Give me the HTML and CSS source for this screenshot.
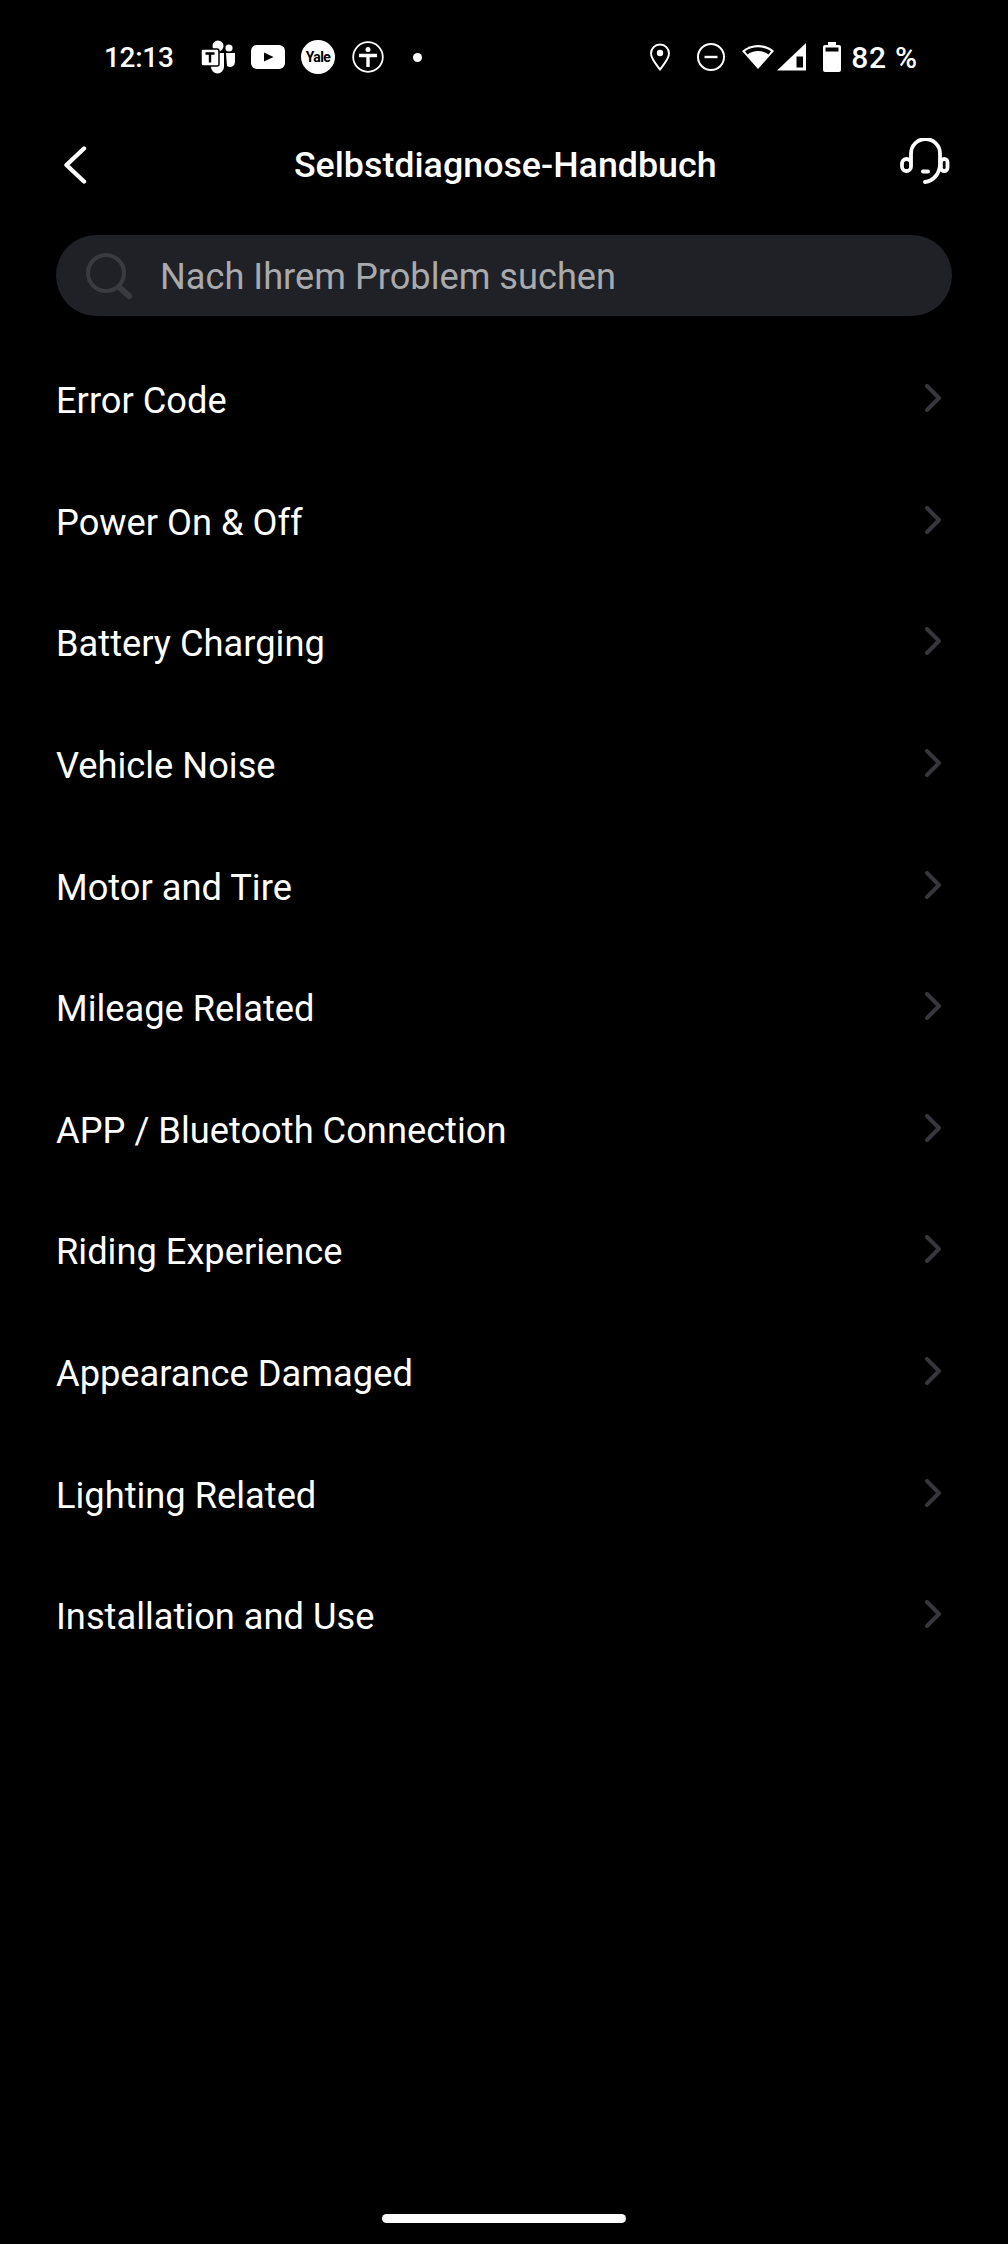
FILE: index.html
```html
<!DOCTYPE html>
<html lang="en">
  <head>
    <meta charset="UTF-8" />
    <meta name="viewport" content="width=device-width, initial-scale=1.0" />
    <title>Selbstdiagnose-Handbuch</title>
    <link rel="stylesheet" href="styles.css">
  </head>
  <body>
    <div class="page">
      <div class="status">
        <div class="status-left">
          <span class="time">12:13</span>
          <svg class="ic-teams" viewBox="0 0 36 36" width="36" height="36">
            <circle cx="18" cy="7" r="5.5" fill="#fff"/>
            <circle cx="29" cy="9" r="3.6" fill="#fff"/>
            <path d="M11 14h13v14a6.5 6.5 0 0 1-13 0z" fill="#fff"/>
            <path d="M26 14h9v9a5 5 0 0 1-8 4z" fill="#fff"/>
            <rect x="1" y="10" width="18" height="17" rx="2" fill="#fff" stroke="#000" stroke-width="1.5"/>
            <path d="M5.500 14.500h9M10 14.500v9" stroke="#000" stroke-width="2.400" fill="none"/>
          </svg>
          <svg class="ic-yt" viewBox="0 0 34 24" width="34" height="24">
            <rect width="34" height="24" rx="6" fill="#fff"/>
            <path d="M13 7.500l9.500 4.500-9.500 4.500z" fill="#000"/>
          </svg>
          <span class="ic-yale">Yale</span>
          <svg class="ic-plus" viewBox="0 0 32 32" width="32" height="32">
            <circle cx="16" cy="16" r="14.800" fill="none" stroke="#fff" stroke-width="1.800"/>
            <circle cx="16" cy="8.500" r="2.500" fill="#fff"/>
            <path d="M7 14.500h18M16 14v12" stroke="#fff" stroke-width="3.400" fill="none"/>
          </svg>
          <span class="ic-dot"></span>
        </div>
        <div class="status-right">
          <svg class="ic-pin" viewBox="0 0 22 28" width="22" height="28">
            <path d="M11 26.500C6 20 2 15.500 2 10.500a9 9 0 0 1 18 0C20 15.500 16 20 11 26.500z" fill="none" stroke="#fff" stroke-width="2"/>
            <circle cx="11" cy="10" r="3.200" fill="#fff"/>
          </svg>
          <svg class="ic-dnd" viewBox="0 0 28 28" width="28" height="28">
            <circle cx="14" cy="14" r="13" fill="none" stroke="#fff" stroke-width="2"/>
            <path d="M7.500 14h13" stroke="#fff" stroke-width="2.400"/>
          </svg>
          <svg class="ic-wifi" viewBox="0 0 34 28" width="34" height="28">
            <path d="M17 26L1 8C10 0 24 0 33 8z" fill="#fff"/>
            <path d="M17 8C13 8 9 9.500 6.500 11.500L4 8.300C11 3 23 3 30 8.300L27.500 11.500C25 9.500 21 8 17 8z" fill="#000"/>
          </svg>
          <svg class="ic-signal" viewBox="0 0 30 28" width="30" height="28">
            <path d="M0 27.500L29 0v27.500z" fill="#fff"/>
            <path d="M19.500 13.500h6.500v11h-6.500z" fill="#000"/>
          </svg>
          <svg class="ic-batt" viewBox="0 0 18 30" width="18" height="30">
            <path d="M5 0h8v3h3a2 2 0 0 1 2 2v23a2 2 0 0 1-2 2H2a2 2 0 0 1-2-2V5a2 2 0 0 1 2-2h3z" fill="#fff"/>
            <path d="M2.500 5.500h13v4h-13z" fill="#000"/>
          </svg>
          <span class="pct">82 %</span>
        </div>
      </div>

      <div class="header">
        <svg class="back" viewBox="0 0 24 38" width="24" height="38">
          <path d="M21 2.500L3.500 19 21 35.500" fill="none" stroke="#fff" stroke-width="4.400" stroke-linecap="round" stroke-linejoin="round"/>
        </svg>
        <h1 class="title">Selbstdiagnose-Handbuch</h1>
        <svg class="support" viewBox="0 0 50 46" width="50" height="46">
          <path d="M11 24V15.500a14.500 14.500 0 0 1 29 0V26c0 10-7 17-15 18" fill="none" stroke="#fff" stroke-width="3.800" stroke-linecap="round"/>
          <rect x="2" y="21" width="9" height="12" rx="4.500" fill="none" stroke="#fff" stroke-width="3.800"/>
          <rect x="40.900" y="21" width="6.600" height="12" rx="3.300" fill="none" stroke="#fff" stroke-width="3.800"/>
          <path d="M23 33.500h5" stroke="#fff" stroke-width="4" stroke-linecap="round"/>
        </svg>
      </div>

      <div class="search">
        <svg class="search-ic" viewBox="0 0 48 48" width="48" height="48">
          <circle cx="21" cy="21" r="18" fill="none" stroke="#3a3b40" stroke-width="4"/>
          <path d="M34 35l10 9" stroke="#3a3b40" stroke-width="6" stroke-linecap="round"/>
        </svg>
        <span class="placeholder">Nach Ihrem Problem suchen</span>
      </div>

      <ul class="list">
        <li><span>Error Code</span><svg class="chev" viewBox="0 0 16 28" width="16" height="28"><path d="M2 2l12 12L2 26" /></svg></li>
        <li><span>Power On &amp; Off</span><svg class="chev" viewBox="0 0 16 28" width="16" height="28"><path d="M2 2l12 12L2 26" /></svg></li>
        <li><span>Battery Charging</span><svg class="chev" viewBox="0 0 16 28" width="16" height="28"><path d="M2 2l12 12L2 26" /></svg></li>
        <li><span>Vehicle Noise</span><svg class="chev" viewBox="0 0 16 28" width="16" height="28"><path d="M2 2l12 12L2 26" /></svg></li>
        <li><span>Motor and Tire</span><svg class="chev" viewBox="0 0 16 28" width="16" height="28"><path d="M2 2l12 12L2 26" /></svg></li>
        <li><span>Mileage Related</span><svg class="chev" viewBox="0 0 16 28" width="16" height="28"><path d="M2 2l12 12L2 26" /></svg></li>
        <li><span>APP / Bluetooth Connection</span><svg class="chev" viewBox="0 0 16 28" width="16" height="28"><path d="M2 2l12 12L2 26" /></svg></li>
        <li><span>Riding Experience</span><svg class="chev" viewBox="0 0 16 28" width="16" height="28"><path d="M2 2l12 12L2 26" /></svg></li>
        <li><span>Appearance Damaged</span><svg class="chev" viewBox="0 0 16 28" width="16" height="28"><path d="M2 2l12 12L2 26" /></svg></li>
        <li><span>Lighting Related</span><svg class="chev" viewBox="0 0 16 28" width="16" height="28"><path d="M2 2l12 12L2 26" /></svg></li>
        <li><span>Installation and Use</span><svg class="chev" viewBox="0 0 16 28" width="16" height="28"><path d="M2 2l12 12L2 26" /></svg></li>
      </ul>

      <div class="home-bar"></div>
    </div>
  </body>
</html>
```

FILE: styles.css
```css
*,
*::before,
*::after {
  box-sizing: border-box;
}

body {
  margin: 0;
  background: #000;
  color: #fff;
  font-family: Roboto, "Liberation Sans", sans-serif;
}

svg {
  display: block;
  flex: none;
}

.page {
  display: flex;
  flex-direction: column;
  height: 2244px;
  overflow: hidden;
}

.status {
  display: flex;
  justify-content: space-between;
  align-items: center;
  height: 58px;
  margin-top: 28px;
  padding: 0 90px 0 104px;
}
.status-left,
.status-right {
  display: flex;
  align-items: center;
}
.time {
  width: 68px;
  font-size: 28px;
  font-weight: 500;
  letter-spacing: -0.3px;
}
.pct {
  margin-left: 10px;
  font-size: 30px;
  font-weight: 500;
  letter-spacing: 0.8px;
}
.ic-teams { margin-left: 28px; }
.ic-yt { margin-left: 15px; }
.ic-yale {
  width: 34px;
  height: 34px;
  margin-left: 16px;
  border-radius: 50%;
  background: #fff;
  color: #000;
  font-size: 14px;
  font-weight: 700;
  letter-spacing: -0.6px;
  line-height: 34px;
  text-align: center;
}
.ic-plus { margin-left: 17px; }
.ic-dot {
  width: 9px;
  height: 9px;
  margin-left: 29px;
  border-radius: 50%;
  background: #fff;
}
.ic-dnd { margin-left: 26px; }
.ic-wifi { margin-left: 16px; }
.ic-signal { margin-left: 2px; }
.ic-batt { margin-left: 16px; }

.header {
  display: grid;
  grid-template-columns: 1fr auto 1fr;
  align-items: center;
  height: 66px;
  margin-top: 46px;
  padding: 0 58px 0 63px;
}
.title {
  margin: 0 0 0 -2.500px;
  font-size: 35.800px;
  font-weight: 500;
}
.support {
  justify-self: end;
  margin-top: -8px;
}

.search {
  display: flex;
  align-items: center;
  height: 81px;
  margin: 37px 56px 0;
  padding-left: 29px;
  border-radius: 41px;
  background: #202126;
}
.placeholder {
  margin: 2px 0 0 27px;
  font-size: 36.200px;
  color: #a9aaad;
}

.list {
  list-style: none;
  margin: 24px 0 0;
  padding: 0 56px;
}
.list li {
  display: flex;
  justify-content: space-between;
  align-items: center;
  height: 121.600px;
  font-size: 36.250px;
}
.chev {
  margin: -5px 11px 0 0;
}
.chev path {
  fill: none;
  stroke: #36373c;
  stroke-width: 4;
  stroke-linecap: round;
  stroke-linejoin: round;
}

.home-bar {
  width: 244px;
  height: 9px;
  margin: auto auto 21px;
  border-radius: 5px;
  background: #fff;
}
```
